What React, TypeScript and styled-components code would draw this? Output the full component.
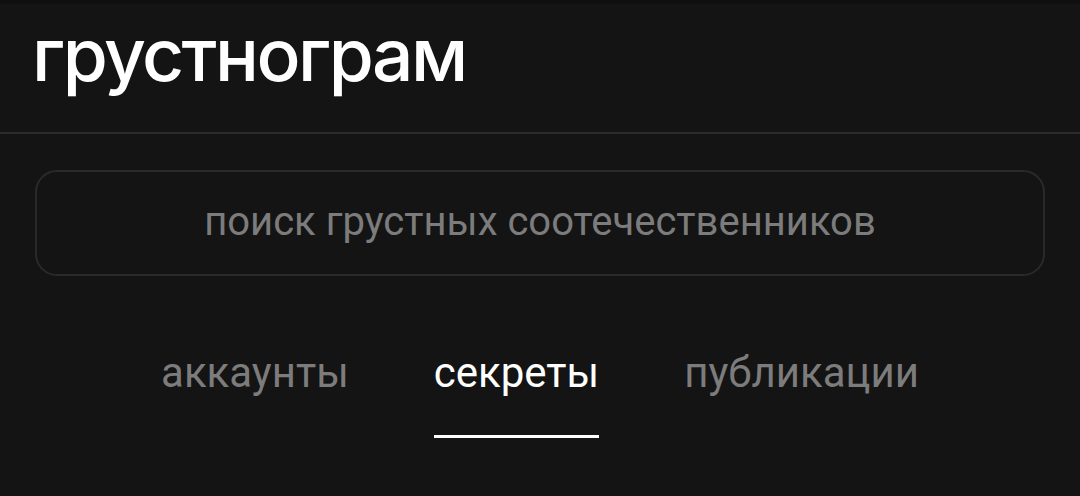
import React from "react";
import styled, { createGlobalStyle } from "styled-components";

const Global = createGlobalStyle`
  html, body { margin: 0; padding: 0; background: #141414; }
  body { font-family: Roboto, "Noto Sans", sans-serif; }
`;

const Page = styled.div`
  width: 1080px;
  height: 496px;
  background: #141414;
  border-top: 4px solid #0f0f0f;
  box-sizing: border-box;
  display: flex;
  flex-direction: column;
  overflow: hidden;
`;

const Header = styled.header`
  height: 130px;
  box-sizing: border-box;
  padding-left: 32px;
  display: flex;
  align-items: center;
  border-bottom: 2px solid #2c2c2c;
`;

const Title = styled.h1`
  margin: 0;
  margin-top: -28px;
  font-family: Inter, Roboto, sans-serif;
  font-weight: 500;
  font-size: 73px;
  line-height: 1;
  letter-spacing: -2.5px;
  color: #ffffff;
`;

const SearchBox = styled.div`
  margin: 36px 35px 0 35px;
  height: 106px;
  box-sizing: border-box;
  border: 2px solid #2a2a2a;
  border-radius: 22px;
  display: flex;
  align-items: center;
  justify-content: center;
`;

const Placeholder = styled.span`
  font-family: Roboto, sans-serif;
  font-size: 40px;
  color: #7c7c7c;
  margin-top: -3px;
`;

const Tabs = styled.nav`
  margin-top: 72px;
  display: flex;
  justify-content: center;
  gap: 85px;
`;

const Tab = styled.div<{ $active?: boolean }>`
  display: flex;
  flex-direction: column;
  align-items: stretch;
  font-family: Roboto, sans-serif;
  font-size: 42px;
  color: ${(p) => (p.$active ? "#ffffff" : "#7c7c7c")};
  &::after {
    content: "";
    display: block;
    margin-top: 38px;
    height: 3px;
    background: ${(p) => (p.$active ? "#ffffff" : "transparent")};
  }
`;

export default function App() {
  return (
    <>
      <Global />
      <Page>
        <Header>
          <Title>грустнограм</Title>
        </Header>
        <SearchBox>
          <Placeholder>поиск грустных соотечественников</Placeholder>
        </SearchBox>
        <Tabs>
          <Tab>аккаунты</Tab>
          <Tab $active>секреты</Tab>
          <Tab>публикации</Tab>
        </Tabs>
      </Page>
    </>
  );
}
